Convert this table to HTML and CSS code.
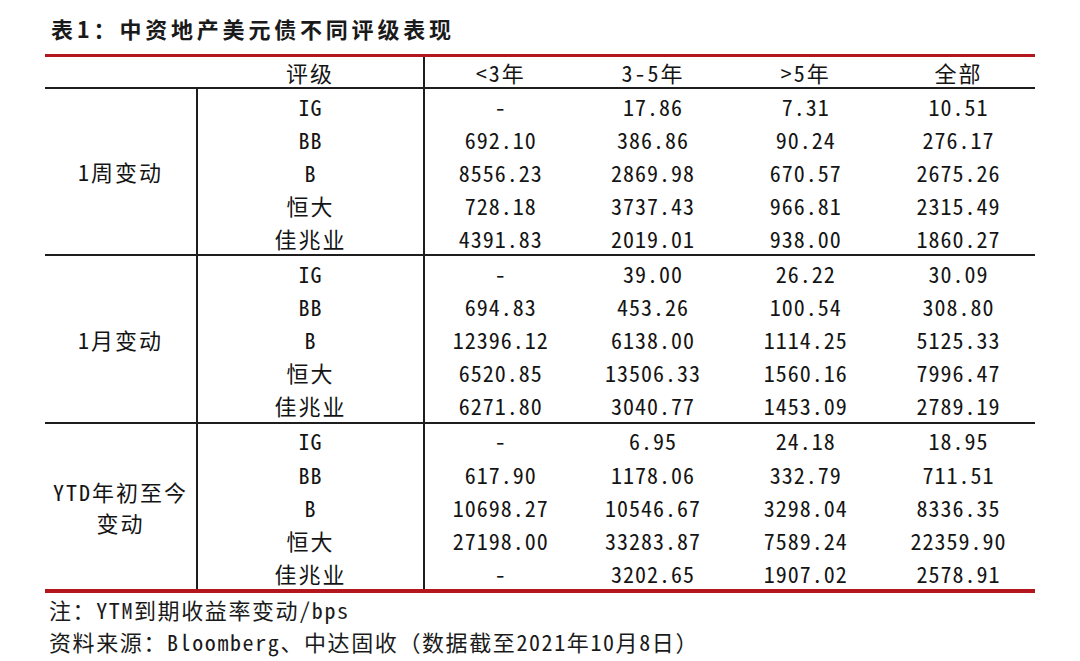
FILE: index.html
```html
<!DOCTYPE html>
<html lang="zh-CN">
<head>
<meta charset="utf-8">
<title>表1：中资地产美元债不同评级表现</title>
<link rel="stylesheet" href="styles.css">
</head>
<body>
<div class="page">
  <h1 class="title">表1：中资地产美元债不同评级表现</h1>
  <table class="data">
    <colgroup>
      <col class="c-group"><col class="c-rate"><col class="c-num"><col class="c-num"><col class="c-num"><col class="c-num">
    </colgroup>
    <thead>
      <tr>
        <th class="blank"></th>
        <th class="rate">评级</th>
        <th>&lt;3年</th>
        <th>3-5年</th>
        <th>&gt;5年</th>
        <th>全部</th>
      </tr>
    </thead>
    <tbody class="grp">
      <tr><td class="glabel" rowspan="5">1周变动</td><td class="rate">IG</td><td>-</td><td>17.86</td><td>7.31</td><td>10.51</td></tr>
      <tr><td class="rate">BB</td><td>692.10</td><td>386.86</td><td>90.24</td><td>276.17</td></tr>
      <tr><td class="rate">B</td><td>8556.23</td><td>2869.98</td><td>670.57</td><td>2675.26</td></tr>
      <tr><td class="rate cjk">恒大</td><td>728.18</td><td>3737.43</td><td>966.81</td><td>2315.49</td></tr>
      <tr><td class="rate cjk">佳兆业</td><td>4391.83</td><td>2019.01</td><td>938.00</td><td>1860.27</td></tr>
    </tbody>
    <tbody class="grp">
      <tr><td class="glabel" rowspan="5">1月变动</td><td class="rate">IG</td><td>-</td><td>39.00</td><td>26.22</td><td>30.09</td></tr>
      <tr><td class="rate">BB</td><td>694.83</td><td>453.26</td><td>100.54</td><td>308.80</td></tr>
      <tr><td class="rate">B</td><td>12396.12</td><td>6138.00</td><td>1114.25</td><td>5125.33</td></tr>
      <tr><td class="rate cjk">恒大</td><td>6520.85</td><td>13506.33</td><td>1560.16</td><td>7996.47</td></tr>
      <tr><td class="rate cjk">佳兆业</td><td>6271.80</td><td>3040.77</td><td>1453.09</td><td>2789.19</td></tr>
    </tbody>
    <tbody class="grp">
      <tr><td class="glabel" rowspan="5">YTD年初至今<br>变动</td><td class="rate">IG</td><td>-</td><td>6.95</td><td>24.18</td><td>18.95</td></tr>
      <tr><td class="rate">BB</td><td>617.90</td><td>1178.06</td><td>332.79</td><td>711.51</td></tr>
      <tr><td class="rate">B</td><td>10698.27</td><td>10546.67</td><td>3298.04</td><td>8336.35</td></tr>
      <tr><td class="rate cjk">恒大</td><td>27198.00</td><td>33283.87</td><td>7589.24</td><td>22359.90</td></tr>
      <tr><td class="rate cjk">佳兆业</td><td>-</td><td>3202.65</td><td>1907.02</td><td>2578.91</td></tr>
    </tbody>
  </table>
  <div class="notes">
    <p class="note">注：YTM到期收益率变动/bps</p>
    <p class="note">资料来源：Bloomberg、中达固收（数据截至2021年10月8日）</p>
  </div>
</div>
</body>
</html>
```
FILE: styles.css
```css
html, body {
  margin: 0;
  padding: 0;
  background: #ffffff;
}

body {
  font-family: "Noto Sans Mono CJK SC", "Noto Sans CJK SC", "DejaVu Sans Mono", monospace;
  color: #141414;
}

.page {
  width: 1080px;
  height: 661px;
  padding: 13px 0 0 45px;
  box-sizing: border-box;
}

.title {
  margin: 0 0 11px 6px;
  font-family: "Noto Sans CJK SC", sans-serif;
  font-size: 22px;
  font-weight: 700;
  line-height: 30px;
  letter-spacing: 3.8px;
  color: #1a1a1a;
}

.data {
  width: 990px;
  border-collapse: collapse;
  table-layout: fixed;
  border-top: 3px solid #b3161c;
  border-bottom: 4px solid #b3161c;
}

.c-group { width: 152px; }
.c-rate { width: 227px; }
.c-num { width: 152.75px; }

.data th,
.data td {
  padding: 0;
  text-align: center;
  vertical-align: middle;
  font-size: 22px;
  font-weight: 400;
  letter-spacing: 1px;
  white-space: nowrap;
}

.data thead th {
  height: 30px;
  line-height: 28px;
  border-bottom: 2px solid #1e1e1e;
  letter-spacing: 2px;
}

.data td {
  height: 33.1px;
  line-height: 28px;
}

.data .rate {
  border-right: 2px solid #1e1e1e;
}

.data .glabel {
  border-right: 2px solid #1e1e1e;
  letter-spacing: 2px;
  line-height: 31px;
}

.data .cjk {
  letter-spacing: 2px;
}

.grp + .grp tr:first-child td {
  border-top: 2px solid #1e1e1e;
}

.notes {
  padding-left: 4px;
}

.note {
  margin: 0;
  font-size: 22px;
  line-height: 32px;
  letter-spacing: 1.6px;
  color: #1a1a1a;
}
```
